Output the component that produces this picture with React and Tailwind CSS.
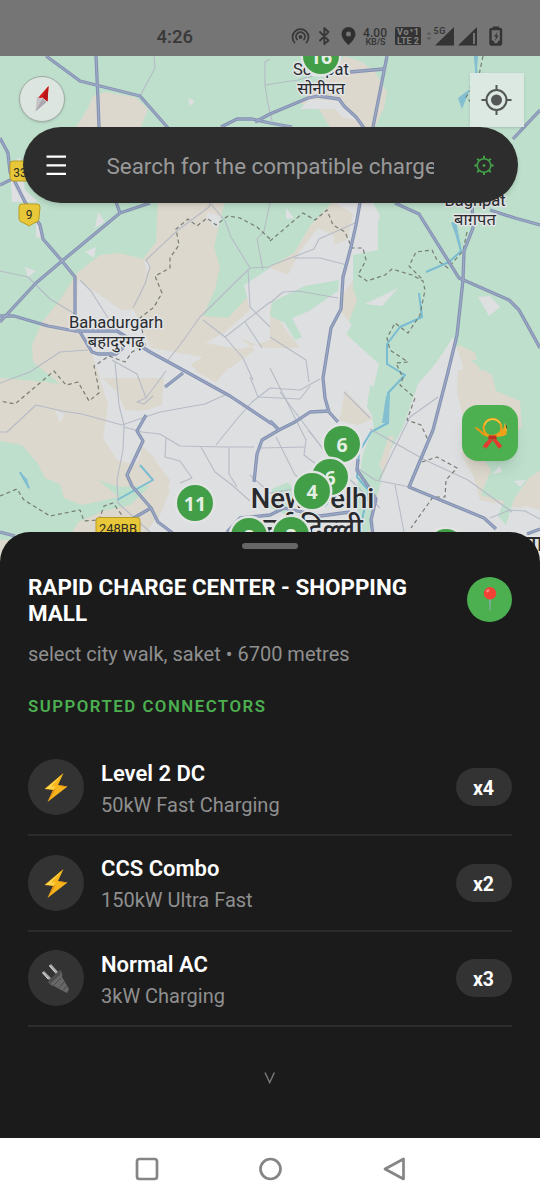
import React from "react";

const majorRoads = [
  "M46 56L80 81L140 96L168 128L200 165",
  "M96 56L98 100L99 127L108 180L120 213",
  "M0 138L8 153L10 172L25 202L40 225L43 239L62 261L75 277L75 316",
  "M0 185L14 178L23 170",
  "M150 203L120 213L62 261L36 283L0 322",
  "M0 316L14 316L48 326L75 331L117 331L150 352L183 370L230 396L272 424",
  "M80 332L92 352L98 354L116 354L124 347",
  "M183 373L165 387",
  "M146 415L137 431L143 441L127 475L132 486L151 508L158 522L174 534",
  "M151 508L132 519",
  "M221 127L237 119L252 119L270 123L292 127",
  "M255 122L270 114L308 98L318 96L339 99L344 106L356 117L364 128",
  "M350 72L384 69",
  "M387 56L373 127L360 203L356 225L351 247L343 277L341 309L331 328L323 378L325 398L329 412L338 422",
  "M329 411L310 412L295 422L279 430L262 440L257 454L254 482",
  "M270 421L279 430",
  "M395 203L419 214L459 278L509 300L519 310L540 348",
  "M490 210L515 218L540 225",
  "M472 203L473 228L464 251L463 280L457 335L447 376L433 430L409 487L450 504L484 518L496 529",
  "M513 139L540 110",
  "M0 532L15 536",
  "M227 532L240 518L270 515L284 508L320 516L350 512",
  "M358 459L357 470L368 486L376 499L371 520L373 535",
  "M527 534L540 529",
];

const minorRoads = [
  "M154 56L155 68L140 96",
  "M270 59L265 62L265 85L268 104L272 121",
  "M265 85L298 80L320 74",
  "M211 200L209 207L178 230L146 260L150 267L145 284L133 308",
  "M0 271L28 277L50 299L75 314",
  "M80 280L91 291L108 318",
  "M211 204L225 221L231 237L250 268L270 267",
  "M250 268L200 317L180 345L168 360",
  "M270 302L225 337L203 320",
  "M248 269L250 307L270 327",
  "M225 337L243 358L253 380",
  "M245 322L262 348",
  "M270 203L264 231L257 239L263 270",
  "M112 360L137 374L146 398L166 371",
  "M88 350L60 352L30 372L0 383",
  "M115 362L119 405L124 425L123 450L117 480L118 503L150 532",
  "M0 432L7 432L36 405L62 411L82 414L122 425L160 412L205 404L225 395",
  "M146 398L137 402L144 404L153 396",
  "M124 427L142 432L160 434L180 446L225 447L254 447",
  "M166 438L165 457L180 461L192 478L180 483",
  "M201 447L215 472L232 485L250 501",
  "M229 447L229 474L237 487",
  "M216 445L237 419L252 402L270 388L300 390L320 379",
  "M270 266L314 249L319 239L355 223",
  "M270 303L283 292L298 291L338 298",
  "M294 258L320 258L347 265",
  "M270 337L306 360L309 382",
  "M250 377L258 397L300 399L310 386",
  "M344 392L370 418",
  "M270 368L306 440L304 455L324 470",
  "M276 437L295 475L310 484",
  "M280 392L320 445L338 475",
  "M438 397L410 417L379 480",
  "M370 429L425 460L468 480L512 512",
  "M356 467L375 480L410 487",
  "M395 485L404 532",
  "M308 430L340 470L380 508",
  "M260 448L305 447",
  "M490 518L510 510L525 511L540 519",
  "M250 475L270 493L300 488",
];

const boundaries = [
  "M270 241L303 213L315 220L327 210L333 225L345 232L352 248L363 248L366 260L358 275L367 281L385 275L392 269L412 275L423 281L425 290L420 315L408 333L395 323L387 338L390 350L408 362L396 363L403 378L400 385L415 398L407 420L421 425L428 440",
  "M467 232L463 251L448 268L437 260L432 250L416 252L409 266L422 279",
  "M422 462L437 457L457 468L446 480L445 497L433 497L411 528",
  "M483 56L478 80L466 97L480 112",
  "M270 239L257 227L240 218L228 216L216 225L207 218L197 226L188 219L176 229L179 245L170 258L170 268L155 276L162 293L154 307L140 318L145 345L132 352L125 362L109 356L94 366L98 385L99 393L89 401L78 382L66 385L54 371L15 404L0 401",
  "M0 496L17 489L24 500L50 516L80 510L84 521L99 520L104 506L113 503L124 518",
];

const markers = [
  { x: 321, y: 56, n: "16" },
  { x: 195, y: 503, n: "11" },
  { x: 342, y: 444, n: "6" },
  { x: 330, y: 477, n: "6" },
  { x: 312, y: 491, n: "4" },
  { x: 249, y: 536, n: "8" },
  { x: 291, y: 535, n: "2" },
  { x: 446, y: 547, n: "3" },
];

function MapLabel({ x, y, size = 16.5, weight = 400, anchor = "middle", children }) {
  return (
    <text
      x={x}
      y={y}
      fontSize={size}
      fontWeight={weight}
      textAnchor={anchor}
      fill="#282a2d"
      stroke="#e2e4e6"
      strokeWidth="3"
      strokeLinejoin="round"
      paintOrder="stroke"
    >
      {children}
    </text>
  );
}

function RoadPaths({ paths, ...props }) {
  return (
    <g fill="none" strokeLinejoin="round" {...props}>
      {paths.map((d) => (
        <path key={d} d={d} />
      ))}
    </g>
  );
}

function MapCanvas() {
  return (
    <svg
      className="absolute inset-0 h-[504px] w-[540px] font-[Roboto,'Noto_Sans',sans-serif]"
      viewBox="0 56 540 504"
    >
      <rect y="56" width="540" height="504" fill="#bddfcb" />
      <g fill="#ddd8cd">
        <path d="M76 127L88 108L93 96L105 92L135 97L148 109L141 127Z" />
        <path d="M345 56L362 62L375 72L387 92L384 108L375 127H330L318 108L300 103Z" />
        <path d="M158 200H226L222 222L215 250L221 270L215 290L203 316L228 318L245 300L270 267L294 253L310 226L334 200H366L372 218L352 248L353 288L357 300L346 330L353 347L330 350L270 350V560H0V378L46 382L60 384L33 362L32 345L42 322L60 300L78 272L100 255L120 253L143 259L156 242Z" />
        <path d="M425 378L442 354L460 345L475 353L480 372L540 372V560H350Z" />
      </g>
      <g fill="#dedfe0">
        <path d="M244 285L270 268L288 275L300 251L318 228L334 236L334 245L347 240L355 205L378 214L378 250L353 255V280L335 305L352 325L346 334L379 364L370 402L374 430L362 458L355 535H145L163 508L170 480L145 448L135 465L117 460L103 438L108 405L94 360L76 320L78 280L104 298L121 310L134 310L151 348L203 357L190 365L216 382L244 350L205 343L225 332L250 310Z" />
        <path d="M418 384L437 362L453 337L463 366L458 391L464 420L462 455L473 475L480 500L520 508L540 500V560H366L374 512L387 455L402 430Z" />
        <path d="M289 303L320 296L342 287V345L317 332L305 320Z" />
        <path d="M310 99L340 101L358 121L342 117L335 109L300 109Z" />
        <path d="M10 165L20 157L25 190L38 202H12Z M478 297L490 296L500 307L489 316Z M365 304L398 288L382 306Z M188 98L195 101L190 106Z M95 228L98 212L105 222Z M85 252L96 247L94 258Z M25 267L36 271L28 277Z M222 250L237 243L240 250L232 254Z M36 222L41 225L43 239L36 237Z" />
        <path d="M208 212L219 216L224 223L215 228L206 217Z M144 261L151 264L147 272Z M55 410L65 414L60 423Z M330 200H372L380 216L370 250L362 245L362 219Z" />
      </g>
      <g fill="#ddd8cd">
        <path d="M193 370L217 383L196 364L270 340V307L286 330L300 348L265 348L240 338L255 350L230 368Z" />
        <path d="M345 390L373 419L358 425L340 419Z M102 378H164L162 405L142 411L125 410L118 393Z" />
        <path d="M338 420L352 397L369 419L356 425Z M140 445L155 458L143 466Z M153 475L170 490L158 520L130 520L117 507Z" />
        <path d="M458 370H490L496 392L520 405L522 430L489 465L479 485L462 456L464 420L457 392Z M373 452L384 435L394 436L384 475Z" />
        <path d="M531 475L540 470V510L516 503Z" />
      </g>
      <g fill="#bddfcb">
        <path d="M225 200H298L286 245L257 260L246 277L238 306L224 317L205 312L215 290L220 266L214 247Z" />
        <path d="M270 200H328L300 225L288 252L270 262Z" />
        <path d="M272 302L305 286L339 280L338 291L309 311L292 318L302 337L295 340L285 323L270 316Z" />
        <path d="M0 441L22 445L38 464L45 478L60 484L64 498L82 505L119 497L98 480L120 487L150 486L130 505L103 511L78 522L68 540H0Z" />
        <path d="M378 368L430 360L405 395L391 430L376 474L368 493L374 525L361 539L357 487L364 451L376 422L367 407L370 385L379 390Z" />
        <path d="M470 360H540V470L528 479L514 499L506 525L498 516L504 501L481 495L491 470L480 455L510 441L522 426L520 401L496 391L492 375Z" />
        <path d="M272 489L288 482L299 498L285 514L270 508Z" />
      </g>
      <path d="M492 474L500 466L502 472Z M514 481L526 480L520 487Z M286 208L294 218L286 219Z" fill="#dfe0e2" />
      <RoadPaths
        stroke="#79bcd2"
        strokeWidth="2"
        paths={[
          "M475 56L477 77L470 88M462 97L460 102",
          "M453 222L461 251L449 262L426 272",
          "M419 293L422 317L400 327L387 344L387 364L405 375L388 393L388 423L371 432L359 452L357 477L369 491L363 515L360 532",
          "M140 465L153 480L117 500M20 472L29 488",
        ]}
      />
      <path d="M458 98L470 89L462 109Z M474 56H478L476 80Z M451 223L456 222L462 251Z M386 396L390 393L389 423L382 423Z M20 472L27 479L30 490Z" fill="#83bed1" />
      <RoadPaths paths={minorRoads} stroke="#b6bbc6" strokeWidth="1.1" />
      <RoadPaths paths={boundaries} stroke="#777d75" strokeWidth="1.2" strokeDasharray="4 3" />
      <RoadPaths paths={majorRoads} stroke="#8391b2" strokeWidth="3.3" />
      <RoadPaths paths={majorRoads} stroke="#9ca8c4" strokeWidth="1.3" />
      <g fill="#e8c839" stroke="#b99a24">
        <path d="M10 164Q10 161 13 161H37V183L26 181L12 181Q10 179 10 176Z" />
        <path d="M19 207Q19 204 22 204H37Q40 204 40 207L39 218Q39 222 34 223L29 226L24 223Q19 222 19 218Z" />
        <rect x="96" y="517.500" width="44" height="24" rx="3" />
      </g>
      <g fontSize="12" fill="#2c2b24" textAnchor="middle">
        <text x="20" y="177">33</text>
        <text x="29" y="219">9</text>
        <text x="118" y="533" fontSize="13">248BB</text>
      </g>
      <MapLabel x="321" y="75">Sonipat</MapLabel>
      <MapLabel x="321" y="94">सोनीपत</MapLabel>
      <MapLabel x="475" y="206">Baghpat</MapLabel>
      <MapLabel x="475" y="225">बाग़पत</MapLabel>
      <MapLabel x="116" y="328">Bahadurgarh</MapLabel>
      <MapLabel x="116" y="347">बहादुरगढ़</MapLabel>
      <MapLabel x="312.5" y="508" size={27.5} weight={500}>New Delhi</MapLabel>
      <MapLabel x="313" y="538" size={28} weight={500}>नई दिल्ली</MapLabel>
      <MapLabel x="524" y="551" size={22} weight={500} anchor="start">गाज़ि</MapLabel>
      {markers.map((m, i) => (
        <g key={i}>
          <circle cx={m.x} cy={m.y} r="20.500" fill="#e2e4e4" />
          <circle cx={m.x} cy={m.y} r="18" fill="#439f47" />
          <text x={m.x} y={m.y + 7.5} fontSize="19.500" fontWeight="700" fontFamily="Noto Sans" fill="#e3efe3" textAnchor="middle">
            {m.n}
          </text>
        </g>
      ))}
    </svg>
  );
}

function StatusBar() {
  return (
    <header className="flex h-14 shrink-0 items-start bg-[#757575] pl-[156.5px] font-[Roboto,sans-serif] text-[#383838]">
      <time className="w-[133.5px] pt-[23px] text-[18.5px] leading-7 font-medium">4:26</time>
      <svg className="mt-[24px] h-7 w-[220px]" viewBox="290 24 220 28" fill="none">
        <g stroke="#383838" strokeWidth="1.8" strokeLinecap="round">
          <path d="M294.500 42.500a8 8 0 1 1 12 0M297 39.500a4.500 4.500 0 1 1 7 0" />
          <circle cx="300.500" cy="37" r="1" fill="#383838" />
          <path d="M320 32L328.500 40.500L324.300 44V28L328.500 32L320 40.500" strokeLinejoin="round" />
        </g>
        <path d="M348.500 27a7 7 0 0 0-7 7c0 5 7 11 7 11s7-6 7-11a7 7 0 0 0-7-7zm0 4.500a2.500 2.500 0 1 1 0 5 2.500 2.500 0 0 1 0-5z" fill="#303030" />
        <g fill="#343434" fontSize="12" fontWeight="500" textAnchor="middle">
          <text x="375" y="36.500" textLength="24">4.00</text>
          <text x="375.500" y="44.500" fontSize="9" textLength="20">KB/S</text>
          <rect x="395" y="27" width="26" height="18" rx="1.500" />
          <text x="408" y="35" fontSize="9" fontWeight="700" fill="#858585" textLength="22">Vo⁴1</text>
          <text x="408" y="44" fontSize="9" fontWeight="700" fill="#858585" textLength="22">LTE 2</text>
          <text x="439.500" y="34" fontSize="9" textLength="12">5G</text>
        </g>
        <path d="M426.500 34.500L429 32L431.500 34.500ZM426.500 37.500L429 40L431.500 37.500Z" fill="#565656" />
        <path d="M435 45.500L454 27V45.500ZM458 45.500L477 27V45.500Z" fill="#343434" />
        <path d="M474 33V44" stroke="#757575" strokeWidth="2" />
        <rect x="490.500" y="29" width="10.500" height="15.500" rx="1" stroke="#343434" strokeWidth="2.400" />
        <path d="M493 26.500H499V29H493ZM490 40L494 41L495 45H491ZM502 40L498 41L497 45H501ZM497.500 32L494 36.500H496L495 41L498.500 35.500H496.500Z" fill="#343434" />
      </svg>
    </header>
  );
}

function Compass() {
  return (
    <button aria-label="Compass" className="flex h-[46px] w-[46px] items-center justify-center rounded-full border border-[#a0aba4] bg-[#dce5df] shadow">
      <svg className="h-8 w-8" viewBox="0 0 32 32">
        <path d="M22.500 3L21.500 18.500L16.500 14.500L11 16Z" fill="#d31b1b" />
        <path d="M22.500 3L16.500 14.500L21.500 18.500Z" fill="#b91518" />
        <path d="M11 14L16.500 15.500L20.500 19L9.500 28.500Z" fill="#c5c3c8" />
        <path d="M16.500 15.500L20.500 19L9.500 28.500Z" fill="#aaa8af" />
      </svg>
    </button>
  );
}

function LocateButton() {
  return (
    <button aria-label="My location" className="flex h-[54px] w-[54px] items-center justify-center bg-[#dce9e2] text-[#535755] shadow">
      <svg className="h-8 w-8" viewBox="0 0 32 32" fill="none" stroke="currentColor" strokeWidth="2">
        <circle cx="15.500" cy="16" r="10" />
        <circle cx="15.500" cy="16" r="5.500" fill="currentColor" stroke="none" />
        <path d="M15.500 1V6M15.500 26V31M.5 16H5.500M25.500 16H30.500" />
      </svg>
    </button>
  );
}

function SearchBar() {
  return (
    <div className="ml-[22.5px] flex h-[75.500px] w-[495px] items-center rounded-full bg-[#2d2d2d] pl-[23px] shadow-md">
      <svg className="h-5 w-5 shrink-0" viewBox="0 0 20 20" stroke="#fff" strokeWidth="2.200">
        <path d="M.5 1.600H20M.5 10.300H20M.5 18.800H20" />
      </svg>
      <div className="ml-[41px] w-[327.5px] overflow-hidden pt-[2.5px] font-[Roboto,sans-serif] text-[22.4px] leading-8 whitespace-nowrap text-[#999]">
        Search for the compatible charger
      </div>
      <svg className="ml-[39.5px] h-5 w-5 shrink-0" viewBox="0 0 20 20" fill="none" stroke="#43a047" strokeWidth="1.600">
        <circle cx="10" cy="10.500" r="6.800" />
        <circle cx="10" cy="10.500" r="1.400" fill="#43a047" stroke="none" />
        <path d="M10 .8V3.500M10 17.500V20M.3 10.500H3M17 10.500H19.700M3.200 3.700L5 5.500M15 15.500L16.800 17.300M3.200 17.300L5 15.500M15 5.500L16.800 3.700" strokeWidth="2" />
      </svg>
    </div>
  );
}

function HornButton() {
  return (
    <button aria-label="Horn" className="flex h-14 w-14 items-center justify-center rounded-2xl bg-[#4caf50] shadow-lg">
      <svg className="h-[34px] w-[34px]" viewBox="0 0 34 34" fill="none">
        <path d="M3 12L6.500 14.500Q11 20 18 20Q26 19.500 31 13" stroke="#e69a17" strokeWidth="2" strokeLinecap="round" />
        <circle cx="19.500" cy="11.700" r="8.900" stroke="#e8a01a" strokeWidth="2.200" />
        <path d="M11.500 9A8.900 8.900 0 0 1 27 7" stroke="#ffc843" strokeWidth="1.300" />
        <path d="M24 18.500Q30 16 32 8L34 13L33.500 18.500Q29 21.500 22 20.500Z" fill="#efa31b" />
        <path d="M32 7.500Q34.500 9 34 14Q32 12 32 7.500Z" fill="#694122" />
        <path d="M32 7.500Q31.500 12 34 14.500" stroke="#ffd34e" strokeWidth=".8" />
        <path d="M15.500 19.500H23.500V23.500H15.500Z" fill="#c22d23" />
        <path d="M16 23L10.500 29L9.500 31.500L12 31L13 33L20 24ZM19.500 24L26 33L27.500 31L29 31.500L28.500 29L23 23Z" fill="#e33c2e" />
      </svg>
    </button>
  );
}

function PinIcon() {
  return (
    <svg className="h-7 w-7" viewBox="0 0 28 28">
      <path d="M13.200 12H14.800L14.400 25.500H13.600Z" fill="#8caeb9" />
      <circle cx="14" cy="8.300" r="6.200" fill="#f44336" />
      <ellipse cx="11.800" cy="5.700" rx="1.800" ry="1.300" fill="#ff897e" transform="rotate(-35 11.800 5.700)" />
    </svg>
  );
}

function BoltIcon() {
  return (
    <svg className="h-[30px] w-[30px]" viewBox="0 0 30 30">
      <path d="M22.500 1L3.500 17L12 18L6.500 30L26.500 14.500L17 13Z" fill="#f7b51d" />
      <path d="M22 1.800L4.500 16.700L12 17.300L15 14.500L10 14.500Z" fill="#ffd64c" />
      <path d="M12 18L14.500 17.600L7 29.500ZM17 13L26.500 14.500L22 15Z" fill="#e58b16" />
    </svg>
  );
}

function PlugIcon() {
  return (
    <svg className="h-[30px] w-[30px]" viewBox="0 0 30 30">
      <path d="M9 2L16 10M2 9L9 16" stroke="#a9a9a9" strokeWidth="2.800" />
      <path d="M19 7Q22 10 21 14L25 21L28 26L26 30L20 27L13 23Q9 22 7 19Z" fill="#686868" />
      <path d="M20 15L13 22M23 19L18 24.500M25.500 23L22 27.500" stroke="#484848" />
      <path d="M19 7Q21 10 19 12L9 21L7 19Z" fill="#4e4e4e" />
      <path d="M8.500 2.500L14 9M1.500 9.500L7 16" stroke="#dcdcdc" />
    </svg>
  );
}

const connectors = [
  { name: "Level 2 DC", detail: "50kW Fast Charging", count: "x4", Icon: BoltIcon },
  { name: "CCS Combo", detail: "150kW Ultra Fast", count: "x2", Icon: BoltIcon },
  { name: "Normal AC", detail: "3kW Charging", count: "x3", Icon: PlugIcon },
];

function ConnectorRow({ name, detail, count, Icon }) {
  return (
    <li className="flex h-[95.5px] items-center border-b-2 border-[#2c2c2c]">
      <div className="flex h-14 w-14 items-center justify-center rounded-full bg-[#333]">
        <Icon />
      </div>
      <div className="ml-[17px] flex-1 pt-[3px]">
        <h3 className="text-[22px] leading-8 font-semibold text-white">{name}</h3>
        <p className="text-[20px] leading-[30px] text-[#8f8f8f]">{detail}</p>
      </div>
      <span className="flex h-[38px] w-14 items-center justify-center rounded-full bg-[#333] pt-[3px] pr-px text-[19.5px] font-bold text-white">
        {count}
      </span>
    </li>
  );
}

function StationSheet() {
  return (
    <section className="relative z-10 flex h-[606px] shrink-0 flex-col rounded-t-[30px] bg-[#1b1b1b] px-7 font-[Roboto,sans-serif]">
      <div className="mt-[11px] h-[5.500px] w-14 shrink-0 self-center rounded-full bg-[#666]" />
      <div className="mt-[25px] flex h-[95px] shrink-0 items-start justify-between">
        <div>
          <h1 className="w-[410px] text-[22.4px] leading-[26.5px] font-bold text-white">
            RAPID CHARGE CENTER - SHOPPING MALL
          </h1>
          <p className="mt-[12px] text-[20px] leading-[30px] text-[#8f8f8f]">
            select city walk, saket • 6700 metres
          </p>
        </div>
        <button aria-label="Show on map" className="mt-[3px] flex h-[45px] w-[45px] items-center justify-center rounded-full bg-[#4caf50]">
          <PinIcon />
        </button>
      </div>
      <h2 className="mt-[25px] mb-px text-[16.8px] leading-6 font-semibold tracking-[1.5px] text-[#4caf50]">SUPPORTED CONNECTORS</h2>
      <ul className="mt-[22px]">
        {connectors.map((c) => (
          <ConnectorRow key={c.name} {...c} />
        ))}
      </ul>
      <svg className="mt-[45px] h-3 w-3 self-center" viewBox="0 0 12 12" fill="none" stroke="#777" strokeWidth="1.500">
        <path d="M1 .5L5.700 10.500L10.400 .5" />
      </svg>
    </section>
  );
}

function NavigationBar() {
  return (
    <nav className="flex h-[62px] items-center justify-between bg-white px-[134px]">
      <svg className="h-6 w-[272px] shrink-0" viewBox="134 1157 272 24" fill="none" stroke="#858585" strokeWidth="2.700" strokeLinejoin="round">
        <rect x="137" y="1159" width="20" height="20" rx="2.500" />
        <circle cx="270.500" cy="1169" r="10" />
        <path d="M403.500 1159V1179L385 1169Z" />
      </svg>
    </nav>
  );
}

export default function App() {
  return (
    <div className="flex h-[1200px] w-[540px] flex-col overflow-hidden bg-white">
      <StatusBar />
      <main className="relative h-[476px] shrink-0">
        <MapCanvas />
        <div className="relative flex h-full flex-col">
          <div className="flex h-[71px] items-start justify-between pt-[17px] pr-4 pl-[19px]">
            <div className="pt-[3px]">
              <Compass />
            </div>
            <LocateButton />
          </div>
          <SearchBar />
          <div className="mt-[202px] flex justify-end pr-[22px]">
            <HornButton />
          </div>
        </div>
      </main>
      <StationSheet />
      <NavigationBar />
    </div>
  );
}
